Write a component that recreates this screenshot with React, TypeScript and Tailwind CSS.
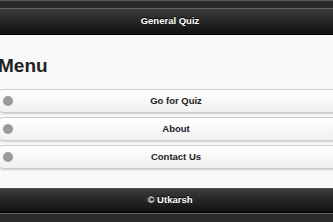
const ITEMS = ['Go for Quiz', 'About', 'Contact Us']

function MenuButton({ label }: { label: string }) {
  return (
    <div className="relative flex h-[24px] items-center justify-center rounded-[8px] border border-[#cccccc] bg-gradient-to-b from-[#ffffff] to-[#f0f0f0] shadow-[0_1px_2px_rgba(0,0,0,0.18)]">
      <span className="absolute left-[6px] top-1/2 h-[10px] w-[10px] -translate-y-1/2 rounded-full bg-[#999999]" />
      <span className="text-[9.5px] font-bold text-[#222222]">{label}</span>
    </div>
  )
}

export default function App() {
  return (
    <div
      className="h-[222px] w-[333px] overflow-hidden bg-[#f9f9f9]"
      style={{ fontFamily: '"Liberation Sans", Arial, sans-serif' }}
    >
      <div className="w-[340px]">
        <div className="h-[8px] border-t border-[#5a5a5a] bg-[#2a2a2a]" />
        <div className="flex h-[27px] items-center justify-center border-t border-[#5f5f5f] border-b border-b-[#000000] bg-gradient-to-b from-[#3c3c3c] to-[#111111]">
          <span className="text-[9.5px] font-bold text-white [text-shadow:0_-1px_0_#000]">General Quiz</span>
        </div>

        <div className="flex h-[153px] flex-col pt-[20px]">
          <h1 className="ml-[-2px] text-[19px] font-bold leading-[22px] text-[#222222]">Menu</h1>
          <div className="ml-[-4px] mr-[-16px] mt-[12px] flex flex-col gap-[4px]">
            {ITEMS.map((t) => (
              <MenuButton key={t} label={t} />
            ))}
          </div>
        </div>

        <div className="flex h-[25px] items-center justify-center border-t border-[#555555] border-b border-b-[#000000] bg-gradient-to-b from-[#3c3c3c] to-[#111111]">
          <span className="text-[9.5px] font-bold text-white [text-shadow:0_-1px_0_#000]">© Utkarsh</span>
        </div>
        <div className="h-[12px] border-t border-[#6a6a6a] bg-[#2a2a2a]" />
      </div>
    </div>
  )
}
